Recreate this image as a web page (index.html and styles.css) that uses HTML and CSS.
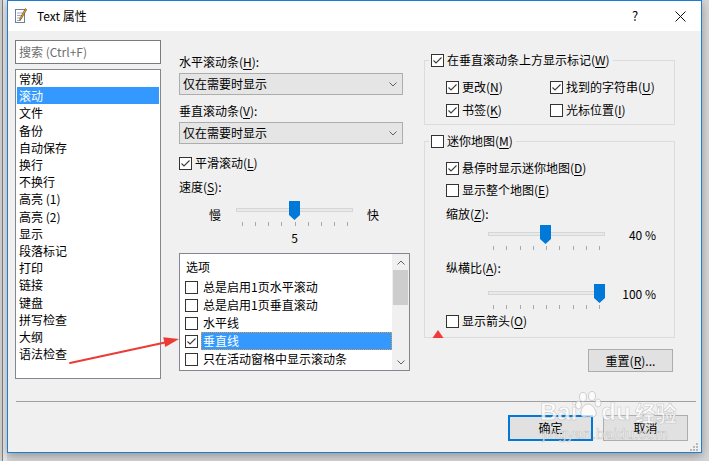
FILE: index.html
```html
<!DOCTYPE html>
<html lang="zh-CN">
<head>
  <meta charset="UTF-8">
  <title>Text 属性</title>
  <link rel="stylesheet" href="styles.css">
</head>
<body>
  <div class="window">
    <div class="titlebar">
      <svg class="app-icon" width="12" height="16" viewBox="0 0 12 16">
        <rect x="0.5" y="1.5" width="9" height="13" fill="#fff" stroke="#6f7f9f"/>
        <path d="M2 5h6M2 7.5h6M2 10h5M2 12.5h4" stroke="#9aaac0" stroke-width="1"/>
        <path d="M10.3 0.6 L11.7 1.6 L6.2 11.2 L4.7 12.2 L4.9 10.4 Z" fill="#e9a43a" stroke="#6a4200" stroke-width="0.6"/>
      </svg>
      <span class="title">Text 属性</span>
      <span class="help">?</span>
      <span class="close">
        <svg width="11" height="11" viewBox="0 0 11 11"><path d="M0.5 0.5 L10.5 10.5 M10.5 0.5 L0.5 10.5" stroke="#111" stroke-width="1"/></svg>
      </span>
    </div>

    <div class="content">
      <div class="main">
        <!-- 左侧分类 -->
        <div class="col-left">
          <div class="search">搜索 (Ctrl+F)</div>
          <ul class="cat-list">
            <li>常规</li>
            <li class="sel">滚动</li>
            <li>文件</li>
            <li>备份</li>
            <li>自动保存</li>
            <li>换行</li>
            <li>不换行</li>
            <li>高亮 (1)</li>
            <li>高亮 (2)</li>
            <li>显示</li>
            <li>段落标记</li>
            <li>打印</li>
            <li>链接</li>
            <li>键盘</li>
            <li>拼写检查</li>
            <li>大纲</li>
            <li>语法检查</li>
          </ul>
        </div>

        <!-- 中间: 滚动条设置 -->
        <div class="col-mid">
          <div class="lbl lbl-first">水平滚动条(<u>H</u>):</div>
          <div class="combo">
            <span>仅在需要时显示</span>
            <svg class="chev" width="8" height="5" viewBox="0 0 8 5"><path d="M0.5 0.5 L4 4 L7.5 0.5" stroke="#606060" fill="none"/></svg>
          </div>
          <div class="lbl lbl-gap">垂直滚动条(<u>V</u>):</div>
          <div class="combo">
            <span>仅在需要时显示</span>
            <svg class="chev" width="8" height="5" viewBox="0 0 8 5"><path d="M0.5 0.5 L4 4 L7.5 0.5" stroke="#606060" fill="none"/></svg>
          </div>
          <label class="cbrow smooth">
            <span class="cb"><svg width="11" height="11" viewBox="0 0 11 11"><path d="M1.5 5.5 L4 8 L9.5 2.5" stroke="#3c3c3c" stroke-width="1.1" fill="none"/></svg></span>
            <span>平滑滚动(<u>L</u>)</span>
          </label>
          <div class="lbl speed-lbl">速度(<u>S</u>):</div>
          <div class="speed-row">
            <span class="slow">慢</span>
            <div class="speed-slider">
              <div class="slider">
                <div class="track"></div>
                <div class="ticks"><i></i><i></i><i></i><i></i><i></i><i></i><i></i><i></i><i></i></div>
                <svg class="thumb" style="left: 53px" width="11" height="19" viewBox="0 0 11 19"><polygon points="0,0 11,0 11,14 5.5,19 0,14" fill="#0078d7"/></svg>
              </div>
              <div class="slider-val">5</div>
            </div>
            <span class="fast">快</span>
          </div>

          <div class="options">
            <div class="opt-list">
              <div class="opt-head">选项</div>
              <div class="opt-row"><span class="cb"></span><span class="txt">总是启用1页水平滚动</span></div>
              <div class="opt-row"><span class="cb"></span><span class="txt">总是启用1页垂直滚动</span></div>
              <div class="opt-row"><span class="cb"></span><span class="txt">水平线</span></div>
              <div class="opt-row sel"><span class="cb"><svg width="11" height="11" viewBox="0 0 11 11"><path d="M1.5 5.5 L4 8 L9.5 2.5" stroke="#3c3c3c" stroke-width="1.1" fill="none"/></svg></span><span class="txt">垂直线</span></div>
              <div class="opt-row"><span class="cb"></span><span class="txt">只在活动窗格中显示滚动条</span></div>
            </div>
            <div class="vscroll">
              <div class="sb-btn"><svg width="8" height="5" viewBox="0 0 8 5"><path d="M0.5 4.5 L4 1 L7.5 4.5" stroke="#606060" fill="none"/></svg></div>
              <div class="sb-thumb"></div>
              <div class="sb-space"></div>
              <div class="sb-btn"><svg width="8" height="5" viewBox="0 0 8 5"><path d="M0.5 0.5 L4 4 L7.5 0.5" stroke="#606060" fill="none"/></svg></div>
            </div>
          </div>
        </div>

        <!-- 右侧: 标记与迷你地图 -->
        <div class="col-right">
          <fieldset class="grp">
            <legend>
              <label class="cbrow">
                <span class="cb"><svg width="11" height="11" viewBox="0 0 11 11"><path d="M1.5 5.5 L4 8 L9.5 2.5" stroke="#3c3c3c" stroke-width="1.1" fill="none"/></svg></span>
                <span>在垂直滚动条上方显示标记(<u>W</u>)</span>
              </label>
            </legend>
            <div class="grp-body mark-grid">
              <label class="cbrow">
                <span class="cb"><svg width="11" height="11" viewBox="0 0 11 11"><path d="M1.5 5.5 L4 8 L9.5 2.5" stroke="#3c3c3c" stroke-width="1.1" fill="none"/></svg></span>
                <span>更改(<u>N</u>)</span>
              </label>
              <label class="cbrow">
                <span class="cb"><svg width="11" height="11" viewBox="0 0 11 11"><path d="M1.5 5.5 L4 8 L9.5 2.5" stroke="#3c3c3c" stroke-width="1.1" fill="none"/></svg></span>
                <span>找到的字符串(<u>U</u>)</span>
              </label>
              <label class="cbrow">
                <span class="cb"><svg width="11" height="11" viewBox="0 0 11 11"><path d="M1.5 5.5 L4 8 L9.5 2.5" stroke="#3c3c3c" stroke-width="1.1" fill="none"/></svg></span>
                <span>书签(<u>K</u>)</span>
              </label>
              <label class="cbrow">
                <span class="cb"></span>
                <span>光标位置(<u>I</u>)</span>
              </label>
            </div>
          </fieldset>

          <fieldset class="grp grp-map">
            <legend>
              <label class="cbrow">
                <span class="cb"></span>
                <span>迷你地图(<u>M</u>)</span>
              </label>
            </legend>
            <div class="grp-body">
              <label class="cbrow map-first">
                <span class="cb"><svg width="11" height="11" viewBox="0 0 11 11"><path d="M1.5 5.5 L4 8 L9.5 2.5" stroke="#3c3c3c" stroke-width="1.1" fill="none"/></svg></span>
                <span>悬停时显示迷你地图(<u>D</u>)</span>
              </label>
              <label class="cbrow map-second">
                <span class="cb"></span>
                <span>显示整个地图(<u>E</u>)</span>
              </label>
              <div class="lbl zoom-lbl">缩放(<u>Z</u>):</div>
              <div class="map-slider zoom-slider">
                <div class="slider">
                  <div class="track"></div>
                  <div class="ticks"><i></i><i></i><i></i><i></i><i></i><i></i><i></i><i></i><i></i></div>
                  <svg class="thumb" style="left: 52px" width="11" height="19" viewBox="0 0 11 19"><polygon points="0,0 11,0 11,14 5.5,19 0,14" fill="#0078d7"/></svg>
                </div>
                <span class="map-val">40 %</span>
              </div>
              <div class="lbl ratio-lbl">纵横比(<u>A</u>):</div>
              <div class="map-slider ratio-slider">
                <div class="slider">
                  <div class="track"></div>
                  <div class="ticks"><i></i><i></i><i></i><i></i><i></i><i></i><i></i><i></i><i></i></div>
                  <svg class="thumb" style="left: 106px" width="11" height="19" viewBox="0 0 11 19"><polygon points="0,0 11,0 11,14 5.5,19 0,14" fill="#0078d7"/></svg>
                </div>
                <span class="map-val">100 %</span>
              </div>
              <label class="cbrow arrow-row">
                <span class="cb"></span>
                <span>显示箭头(<u>O</u>)</span>
              </label>
            </div>
          </fieldset>

          <div class="btn reset">重置(<u>R</u>)...</div>
        </div>
      </div>

      <div class="sep"></div>

      <div class="buttons">
        <div class="btn btn-main default">确定</div>
        <div class="btn btn-main">取消</div>
      </div>
    </div>

    <svg class="grip" width="8" height="8" viewBox="0 0 8 8">
      <rect x="6" y="0" width="2" height="2" fill="#b8b8b8"/>
      <rect x="3" y="3" width="2" height="2" fill="#b8b8b8"/>
      <rect x="6" y="3" width="2" height="2" fill="#b8b8b8"/>
      <rect x="0" y="6" width="2" height="2" fill="#b8b8b8"/>
      <rect x="3" y="6" width="2" height="2" fill="#b8b8b8"/>
      <rect x="6" y="6" width="2" height="2" fill="#b8b8b8"/>
    </svg>
  </div>

  <!-- 标注: 红色箭头和三角 -->
  <svg class="marks" width="709" height="461" viewBox="0 0 709 461">
    <path d="M70 363 L165 342.5" stroke="#ec3b36" stroke-width="2" stroke-linecap="round"/>
    <polygon points="179,339 163.3,337.2 165.3,347" fill="#ec3b36"/>
    <polygon points="438,330 443.5,338 432.5,338" fill="#f23a3a"/>
  </svg>

  <!-- 水印 -->
  <div class="watermark">
    <div class="wm-logo">
      <span>Bai</span>
      <svg class="paw" width="30" height="28" viewBox="0 0 30 28">
        <g fill="rgba(255,255,255,0.75)" stroke="rgba(150,150,150,0.5)" stroke-width="0.8">
          <ellipse cx="8" cy="6" rx="3.5" ry="4.5"/>
          <ellipse cx="17" cy="5" rx="3.5" ry="4.5"/>
          <ellipse cx="3.5" cy="14" rx="3" ry="4"/>
          <ellipse cx="23" cy="12" rx="3" ry="4"/>
          <path d="M13 13 C8 13 5 20 6 24 C7 27 11 26 13 25.5 C15 26 19 27 21 24 C22 20 18 13 13 13 Z"/>
        </g>
      </svg>
      <span>du</span>
      <span class="wm-cn">经验</span>
    </div>
    <div class="wm-url">jingyan.baidu.com</div>
  </div>
</body>
</html>
```

FILE: styles.css
```css
body {
  margin: 0;
  width: 709px;
  height: 461px;
  overflow: hidden;
  position: relative;
  font-family: "Noto Sans CJK SC", "Noto Sans", sans-serif;
  font-size: 12px;
  color: #000;
  background: linear-gradient(to right, #cfcfcf 0, #cfcfcf 2px, #7f7f7f 2px, #7f7f7f 3px, #e6e6e6 3px, #e6e6e6 7px, #d6d6d6 7px);
}

u {
  text-decoration: underline;
  text-underline-offset: 2px;
}

.window {
  position: relative;
  margin-left: 7px;
  width: 695px;
  height: 453px;
  box-sizing: border-box;
  border: 1px solid #1a7fd4;
  background: #f0f0f0;
  box-shadow: 0 3px 9px rgba(0, 0, 0, 0.3);
  display: flex;
  flex-direction: column;
}

/* 标题栏 */
.titlebar {
  height: 30px;
  flex-shrink: 0;
  background: #fff;
  display: flex;
  align-items: center;
}

.app-icon {
  margin-left: 7px;
}

.title {
  margin-left: 10px;
  line-height: 16px;
  color: #000;
}

.help {
  margin-left: auto;
  width: 20px;
  text-align: center;
  font-size: 13px;
  line-height: 16px;
}

.close {
  margin-left: 25px;
  margin-right: 11px;
  width: 20px;
  height: 16px;
  display: flex;
  align-items: center;
  justify-content: center;
}

/* 内容区 */
.content {
  flex: 1;
  padding: 9px 13px 0 7px;
  display: flex;
  flex-direction: column;
}

.main {
  display: flex;
  height: 340px;
}

.lbl {
  line-height: 16px;
}

.cb {
  width: 13px;
  height: 13px;
  box-sizing: border-box;
  border: 1px solid #333;
  background: #fff;
  display: inline-flex;
  flex-shrink: 0;
}

.cbrow {
  display: flex;
  align-items: center;
  gap: 3px;
  height: 18px;
  line-height: 16px;
  white-space: nowrap;
}

/* 左栏 */
.col-left {
  width: 146px;
  display: flex;
  flex-direction: column;
  gap: 5px;
}

.search {
  height: 24px;
  box-sizing: border-box;
  border: 1px solid #7a7a7a;
  background: #fff;
  color: #6d6d6d;
  padding-left: 3px;
  line-height: 22px;
}

.cat-list {
  list-style: none;
  margin: 0;
  padding: 0 1px;
  height: 310px;
  box-sizing: border-box;
  border: 1px solid #828790;
  background: #fff;
}

.cat-list li {
  line-height: 17.2px;
  padding-left: 2px;
}

.cat-list li.sel {
  background: #3399ff;
  color: #fff;
}

/* 中栏 */
.col-mid {
  width: 231px;
  margin-left: 18px;
  display: flex;
  flex-direction: column;
}

.lbl-first {
  margin-top: 14px;
}

.lbl-gap {
  margin-top: 8px;
}

.combo {
  margin-top: 3px;
  width: 224px;
  height: 22px;
  box-sizing: border-box;
  border: 1px solid #adadad;
  background: #e5e5e5;
  display: flex;
  align-items: center;
  padding: 0 5px 0 3px;
  line-height: 16px;
}

.combo .chev {
  margin-left: auto;
}

.smooth {
  margin-top: 10px;
}

.speed-lbl {
  margin-top: 7px;
}

.speed-row {
  margin-top: 6px;
  display: flex;
  align-items: flex-start;
}

.slow {
  margin-left: 30px;
  margin-top: 6px;
  line-height: 16px;
}

.fast {
  margin-left: 14px;
  margin-top: 6px;
  line-height: 16px;
}

.speed-slider {
  margin-left: 15px;
  display: flex;
  flex-direction: column;
  align-items: center;
}

.slider-val {
  margin-top: 4px;
  line-height: 16px;
}

.slider {
  position: relative;
  width: 117px;
  height: 25px;
}

.track {
  margin-top: 7px;
  height: 4px;
  box-sizing: border-box;
  border: 1px solid #d6d6d6;
  background: #e7eaea;
}

.ticks {
  display: flex;
  justify-content: space-between;
  padding: 0 5px 0 6px;
  margin-top: 10px;
}

.ticks i {
  width: 1px;
  height: 4px;
  background: #a8a8a8;
}

.thumb {
  position: absolute;
  top: 0;
}

.options {
  margin-top: 7px;
  width: 231px;
  height: 118px;
  box-sizing: border-box;
  border: 1px solid #828790;
  background: #fff;
  display: flex;
}

.opt-list {
  flex: 1;
}

.opt-head {
  padding: 4px 0 2px 6px;
  line-height: 18px;
}

.opt-row {
  display: flex;
  align-items: center;
  height: 18px;
  padding-left: 5px;
  white-space: nowrap;
}

.opt-row .txt {
  margin-left: 3px;
  padding: 0 2px;
  line-height: 18px;
}

.opt-row.sel .txt {
  flex: 1;
  height: 18px;
  box-sizing: border-box;
  line-height: 16px;
  background: #3399ff;
  color: #fff;
  border: 1px dotted #e89a3a;
  padding-left: 1px;
}

.vscroll {
  width: 17px;
  background: #f0f0f0;
  display: flex;
  flex-direction: column;
}

.sb-btn {
  height: 16px;
  display: flex;
  align-items: center;
  justify-content: center;
}

.sb-thumb {
  margin: 0 1px;
  height: 35px;
  background: #cdcdcd;
}

.sb-space {
  flex: 1;
}

/* 右栏 */
.col-right {
  width: 251px;
  margin-left: 14px;
  padding-top: 11px;
  display: flex;
  flex-direction: column;
}

.grp {
  margin: 0;
  padding: 0 0 5px 0;
  border: 1px solid #dcdcdc;
  min-inline-size: auto;
}

.grp legend {
  margin-left: 4px;
  padding: 0 3px 0 2px;
}

.grp-body {
  padding-left: 21px;
}

.mark-grid {
  margin-top: 9px;
  display: grid;
  grid-template-columns: 104px auto;
  row-gap: 5px;
}

.grp-map {
  margin-top: 7px;
  padding-bottom: 7px;
}

.map-first {
  margin-top: 9px;
}

.map-second {
  margin-top: 4px;
}

.zoom-lbl {
  margin-top: 7px;
}

.ratio-lbl {
  margin-top: 10px;
}

.map-slider {
  display: flex;
  align-items: flex-start;
  padding-left: 42px;
}

.map-slider .ticks {
  padding: 0 5px;
}

.zoom-slider {
  margin-top: 3px;
}

.ratio-slider {
  margin-top: 8px;
}

.map-val {
  width: 51px;
  text-align: right;
  margin-top: 2px;
  line-height: 16px;
}

.arrow-row {
  margin-top: 3px;
}

/* 按钮 */
.btn {
  box-sizing: border-box;
  border: 1px solid #adadad;
  background: #e1e1e1;
  text-align: center;
}

.reset {
  align-self: flex-end;
  margin-top: 11px;
  margin-right: 2px;
  width: 85px;
  height: 23px;
  line-height: 21px;
}

.sep {
  margin: 21px -8px 0 1px;
  height: 1px;
  background: #a0a0a0;
}

.buttons {
  margin-top: 13px;
  display: flex;
  justify-content: flex-end;
  gap: 10px;
}

.btn-main {
  width: 85px;
  height: 26px;
  line-height: 24px;
}

.btn-main.default {
  border: 2px solid #0078d7;
  line-height: 22px;
}

.grip {
  position: absolute;
  right: 3px;
  bottom: 1px;
}

/* 标注与水印 */
.marks {
  position: absolute;
  left: 0;
  top: 0;
  pointer-events: none;
}

.watermark {
  position: absolute;
  left: 540px;
  top: 391px;
  pointer-events: none;
  color: rgba(255, 255, 255, 0.8);
  -webkit-text-stroke: 0.6px rgba(140, 140, 140, 0.45);
}

.wm-logo {
  display: flex;
  align-items: flex-end;
  font-family: "Liberation Sans", sans-serif;
  font-weight: bold;
  font-size: 24px;
  line-height: 26px;
}

.wm-logo .paw {
  margin: 0 -4px 6px -2px;
}

.wm-logo .wm-cn {
  font-family: "Noto Sans CJK SC", sans-serif;
  font-size: 21px;
  margin-left: 4px;
}

.wm-url {
  margin-top: 1px;
  padding-left: 2px;
  font-family: "Liberation Sans", sans-serif;
  font-size: 15px;
  line-height: 16px;
  letter-spacing: 0.3px;
}
```
